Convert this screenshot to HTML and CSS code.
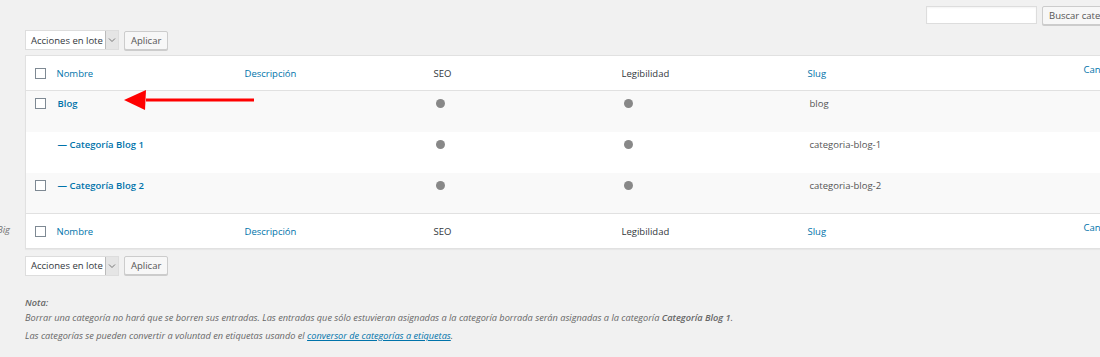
FILE: index.html
```html
<!DOCTYPE html>
<html lang="es">
<head>
    <meta charset="UTF-8">
    <title>Categorías</title>
    <link rel="stylesheet" href="styles.css">
</head>
<body>
    <div class="side-note">Big</div>

    <div class="wrap">
        <div class="search-box">
            <input type="text" class="search-input">
            <button class="button">Buscar categorías</button>
        </div>

        <div class="tablenav top">
            <div class="bulk">
                <div class="select">Acciones en lote<span class="select-arrow"><svg width="8" height="6" viewBox="0 0 8 6"><path d="M1 1.5 L4 4.5 L7 1.5" fill="none" stroke="#777" stroke-width="1"/></svg></span></div>
                <button class="button">Aplicar</button>
            </div>
            <div class="count">3 elementos</div>
        </div>

        <table class="list">
            <colgroup>
                <col class="c-cb">
                <col class="c-name">
                <col class="c-desc">
                <col class="c-seo">
                <col class="c-read">
                <col class="c-slug">
                <col class="c-posts">
            </colgroup>
            <thead>
                <tr>
                    <td class="cb"><span class="check"></span></td>
                    <th><a href="#">Nombre</a></th>
                    <th><a href="#">Descripción</a></th>
                    <th>SEO</th>
                    <th>Legibilidad</th>
                    <th><a href="#">Slug</a></th>
                    <th class="posts"><a href="#">Cantidad</a></th>
                </tr>
            </thead>
            <tbody>
                <tr class="alt">
                    <td class="cb"><span class="check"></span></td>
                    <td class="name"><a href="#">Blog</a></td>
                    <td></td>
                    <td><span class="dot"></span></td>
                    <td><span class="dot"></span></td>
                    <td class="slug">blog</td>
                    <td></td>
                </tr>
                <tr>
                    <td class="cb"></td>
                    <td class="name"><a href="#">— Categoría Blog 1</a></td>
                    <td></td>
                    <td><span class="dot"></span></td>
                    <td><span class="dot"></span></td>
                    <td class="slug">categoria-blog-1</td>
                    <td></td>
                </tr>
                <tr class="alt">
                    <td class="cb"><span class="check"></span></td>
                    <td class="name"><a href="#">— Categoría Blog 2</a></td>
                    <td></td>
                    <td><span class="dot"></span></td>
                    <td><span class="dot"></span></td>
                    <td class="slug">categoria-blog-2</td>
                    <td></td>
                </tr>
            </tbody>
            <tfoot>
                <tr>
                    <td class="cb"><span class="check"></span></td>
                    <th><a href="#">Nombre</a></th>
                    <th><a href="#">Descripción</a></th>
                    <th>SEO</th>
                    <th>Legibilidad</th>
                    <th><a href="#">Slug</a></th>
                    <th class="posts"><a href="#">Cantidad</a></th>
                </tr>
            </tfoot>
        </table>

        <div class="tablenav bottom">
            <div class="bulk">
                <div class="select">Acciones en lote<span class="select-arrow"><svg width="8" height="6" viewBox="0 0 8 6"><path d="M1 1.5 L4 4.5 L7 1.5" fill="none" stroke="#777" stroke-width="1"/></svg></span></div>
                <button class="button">Aplicar</button>
            </div>
            <div class="count">3 elementos</div>
        </div>

        <div class="notes">
            <p><strong>Nota:</strong><br>Borrar una categoría no hará que se borren sus entradas. Las entradas que sólo estuvieran asignadas a la categoría borrada serán asignadas a la categoría <strong>Categoría Blog 1</strong>.</p>
            <p>Las categorías se pueden convertir a voluntad en etiquetas usando el <a href="#">conversor de categorías a etiquetas</a>.</p>
        </div>

        <svg class="arrow" width="132" height="22" viewBox="0 0 132 22">
            <path d="M22 9.5 H130 V12.5 H22 Z" fill="#f00"/>
            <path d="M0 11 L22 1 L21 21 Z" fill="#f00"/>
        </svg>
    </div>
</body>
</html>
```

FILE: styles.css
```css
body {
    margin: 0;
    background: #f1f1f1;
    font-family: "Open Sans", "Noto Sans", sans-serif;
    font-size: 9.5px;
    color: #444;
    width: 1100px;
    height: 357px;
    overflow: hidden;
    position: relative;
}
a {
    color: #0073aa;
    text-decoration: none;
}
.side-note {
    position: absolute;
    left: -3px;
    top: 223px;
    font-style: italic;
    color: #777;
}
.wrap {
    position: relative;
    margin-left: 25px;
    width: 1110px;
}
.search-box {
    display: flex;
    gap: 5px;
    padding: 6px 0 0 901px;
    height: 19px;
}
.search-input {
    width: 111px;
    height: 18px;
    box-sizing: border-box;
    border: 1px solid #ddd;
    background: #fff;
    padding: 0;
    margin: 0;
    box-shadow: inset 0 1px 2px rgba(0,0,0,.05);
}
.button {
    height: 19px;
    padding: 0 6px;
    border: 1px solid #ccc;
    border-radius: 2px;
    background: #f7f7f7;
    color: #555;
    font-family: inherit;
    font-size: 9.5px;
    box-shadow: 0 1px 0 #ccc;
    white-space: nowrap;
}
.search-box .button {
    width: 90px;
    text-align: left;
    flex: none;
}
.tablenav {
    display: flex;
    justify-content: space-between;
    align-items: center;
    height: 29px;
}
.tablenav.top {
    height: 30px;
}
.tablenav .count {
    width: 30px;
    overflow: hidden;
    white-space: nowrap;
    color: #555;
    margin-top: -8px;
}
.tablenav.bottom .count {
    margin-top: 8px;
}
.bulk {
    display: flex;
    align-items: center;
    gap: 5px;
}
.select {
    display: flex;
    align-items: center;
    width: 94px;
    height: 20px;
    box-sizing: border-box;
    padding-left: 5px;
    border: 1px solid #ddd;
    background: #fff;
    color: #32373c;
    position: relative;
}
.select-arrow {
    position: absolute;
    right: 0;
    top: 0;
    bottom: 0;
    width: 12px;
    background: #e5e5e5;
    border-left: 1px solid #bbb;
    display: flex;
    align-items: center;
    justify-content: center;
}
.tablenav.bottom {
    height: 27px;
    margin-top: 3px;
}
.list {
    border-collapse: collapse;
    table-layout: fixed;
    width: 1110px;
    background: #fff;
    border: 1px solid #e1e1e1;
    box-shadow: 0 1px 1px rgba(0,0,0,.04);
}
.c-cb { width: 25px; }
.c-name { width: 187px; }
.c-desc { width: 189px; }
.c-seo { width: 188px; }
.c-read { width: 186px; }
.c-slug { width: 276px; }
.list th,
.list td {
    box-sizing: border-box;
    padding: 0 7px;
    text-align: left;
    font-weight: normal;
    vertical-align: middle;
    line-height: 13px;
    overflow: hidden;
    white-space: nowrap;
}
.list th:nth-child(2) {
    padding-left: 6px;
}
.list thead th,
.list thead td,
.list tfoot th,
.list tfoot td {
    height: 35px;
    color: #32373c;
}
.list thead tr {
    border-bottom: 1px solid #e1e1e1;
}
.list tfoot tr {
    border-top: 1px solid #e1e1e1;
}
.list th.posts {
    vertical-align: top;
    padding-top: 7px;
}
.list td.cb {
    padding: 0 0 0 9px;
}
.check {
    display: block;
    width: 9px;
    height: 9px;
    border: 1px solid #7e8993;
    background: #fff;
}
.list tbody td {
    height: 41px;
    vertical-align: top;
    padding-top: 6px;
}
.list tbody td.cb {
    padding-top: 7px;
}
.list tbody tr.alt {
    background: #f9f9f9;
}
.list td.name a {
    font-weight: 600;
}
.list td.name {
    padding-left: 7px;
}
.list td.slug {
    padding-left: 9px;
    color: #555;
}
.dot {
    display: block;
    width: 9px;
    height: 9px;
    margin: 2px 0 0 2px;
    border-radius: 50%;
    background: #888;
}
.notes {
    padding-top: 16px;
    font-style: italic;
    color: #666;
    font-size: 9.2px;
}
.notes p {
    margin: 0 0 3px;
    line-height: 15px;
}
.notes strong {
    font-weight: 600;
}
.notes a {
    text-decoration: underline;
}
.arrow {
    position: absolute;
    left: 99px;
    top: 89px;
}
```
